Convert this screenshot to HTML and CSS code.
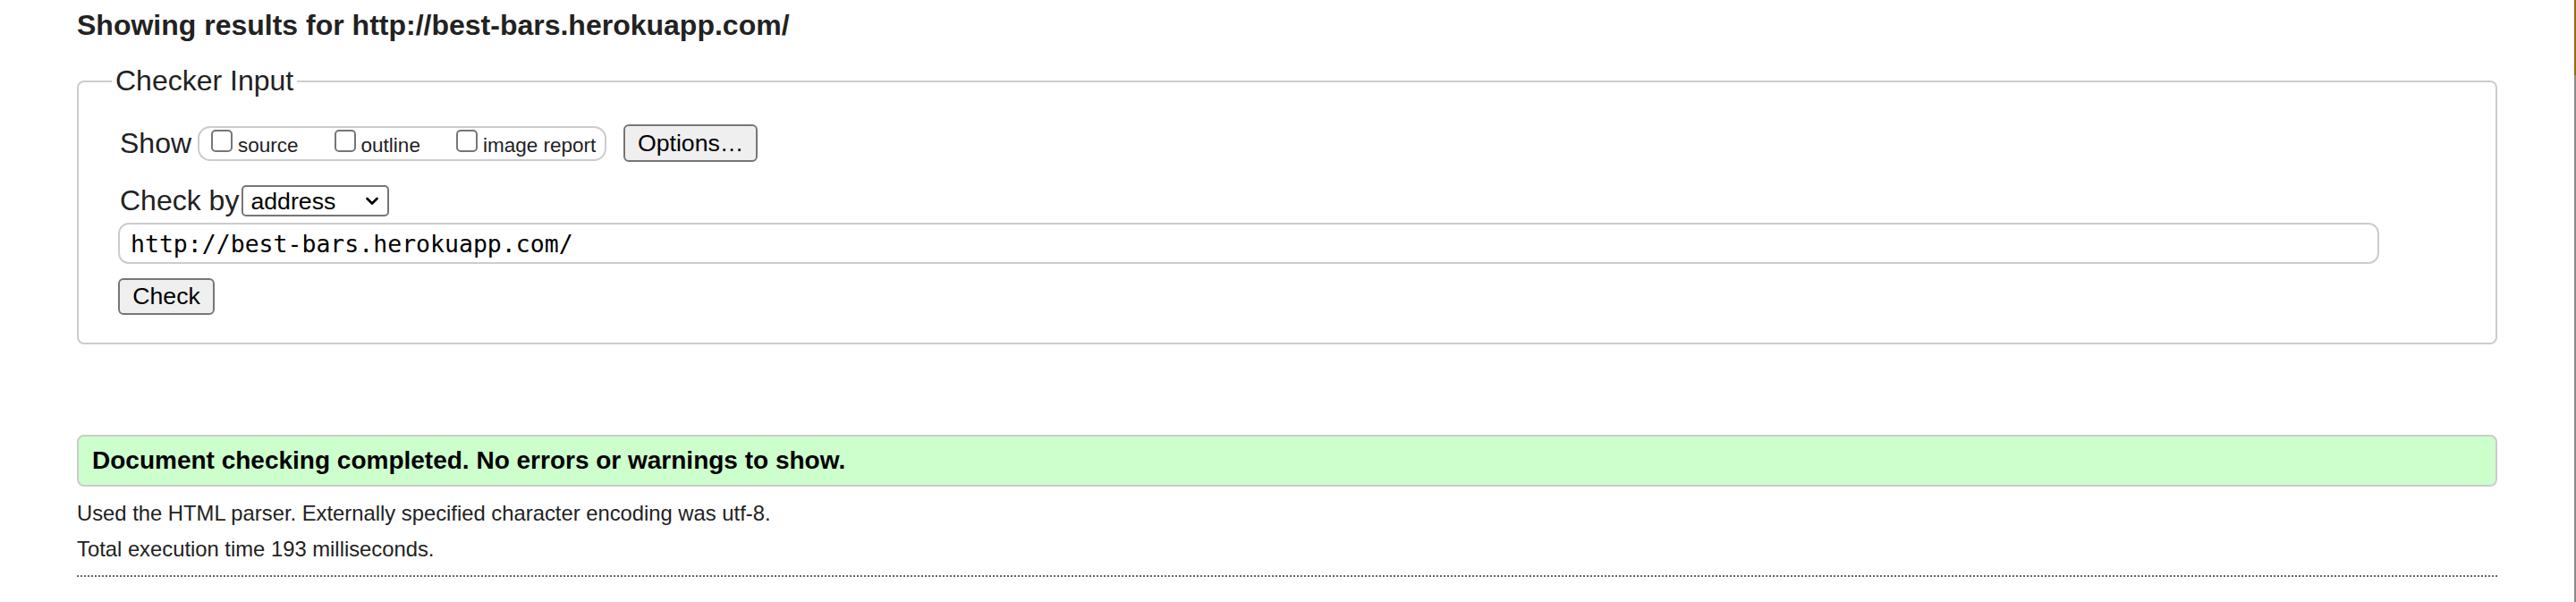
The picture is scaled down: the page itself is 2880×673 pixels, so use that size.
FILE: index.html
```html
<!DOCTYPE html>
<html lang="en">
<head>
<meta charset="utf-8">
<title>Showing results for http://best-bars.herokuapp.com/</title>
<link rel="stylesheet" href="styles.css">
</head>
<body>
<div class="page">
  <h2 class="title">Showing results for http://best-bars.herokuapp.com/</h2>
  <form class="checker">
    <fieldset class="fs">
      <legend class="legend">Checker Input</legend>
      <div class="row row-show">
        <span class="label">Show</span>
        <span class="group">
          <label class="opt"><input type="checkbox" class="cb"><span>source</span></label>
          <label class="opt"><input type="checkbox" class="cb"><span>outline</span></label>
          <label class="opt"><input type="checkbox" class="cb"><span>image report</span></label>
        </span>
        <button type="button" class="btn btn-options">Options…</button>
      </div>
      <div class="row row-by">
        <span class="label">Check by</span>
        <span class="select-wrap">
          <select class="select"><option>address</option></select>
          <svg class="chev" width="14" height="10" viewBox="0 0 14 10"><path d="M1.5 2 L7 7.5 L12.5 2" fill="none" stroke="#000" stroke-width="2.6" stroke-linecap="round" stroke-linejoin="round"/></svg>
        </span>
      </div>
      <div class="row row-url">
        <input type="text" class="url" value="http://best-bars.herokuapp.com/">
      </div>
      <div class="row row-submit">
        <button type="button" class="btn btn-check">Check</button>
      </div>
    </fieldset>
  </form>
  <div class="success">Document checking completed. No errors or warnings to show.</div>
  <p class="details">Used the HTML parser. Externally specified character encoding was utf-8.</p>
  <p class="details">Total execution time 193 milliseconds.</p>
  <hr class="dotted">
</div>
<div class="edge"><div class="edge-top"></div></div>
</body>
</html>
```
FILE: styles.css
```css
html, body {
  margin: 0;
  padding: 0;
  background: #fff;
}
body {
  font-family: "Liberation Sans", Arial, sans-serif;
  color: #222;
}
.page {
  padding: 0 88px 0 86px;
}
.title {
  font-size: 32px;
  font-weight: bold;
  line-height: 36px;
  margin: 10px 0 26px 0;
  color: #222;
}
.fs {
  margin: 0;
  border: 2px solid #ccc;
  border-radius: 8px;
  padding: 30px 44px 31px 44px;
}
.legend {
  font-size: 32px;
  line-height: 37px;
  padding: 0 4px;
  margin-left: -7px;
  color: #222;
}
.row {
  display: flex;
  align-items: center;
}
.label {
  font-size: 32px;
  margin-left: 2px;
  color: #222;
}
.row-show {
  height: 42px;
}
.row-show .label {
  margin-right: 7px;
}
.group {
  display: flex;
  align-items: center;
  height: 35px;
  border: 2px solid #ccc;
  border-radius: 14px;
  padding: 0 10px 0 13px;
  gap: 40px;
}
.opt {
  display: flex;
  align-items: flex-start;
  gap: 6px;
  font-size: 22.5px;
  color: #222;
  height: 30px;
}
.opt span {
  padding-top: 7px;
  line-height: 22px;
}
.cb {
  appearance: none;
  -webkit-appearance: none;
  margin: 0;
  width: 24px;
  height: 25px;
  border: 2px solid #767676;
  border-radius: 5px;
  background: #fff;
  box-sizing: border-box;
}
.btn {
  font-family: "Liberation Sans", Arial, sans-serif;
  font-size: 26.7px;
  color: #000;
  background: #efefef;
  border: 2px solid #767676;
  border-radius: 6px;
  box-sizing: border-box;
  padding: 0;
}
.btn-options {
  margin-left: 19px;
  width: 150px;
  height: 42px;
}
.row-by {
  margin-top: 26px;
  height: 35px;
}
.row-by .label {
  margin-right: 3px;
}
.select-wrap {
  position: relative;
  display: inline-flex;
}
.select {
  appearance: none;
  -webkit-appearance: none;
  width: 165px;
  height: 35px;
  box-sizing: border-box;
  border: 2px solid #767676;
  border-radius: 5px;
  background: #fff;
  font-family: "Liberation Sans", Arial, sans-serif;
  font-size: 26.7px;
  color: #000;
  padding: 0 0 0 8px;
}
.chev {
  position: absolute;
  right: 12px;
  top: 13px;
}
.row-url {
  margin-top: 7px;
}
.url {
  width: 2528px;
  height: 46px;
  box-sizing: border-box;
  border: 2px solid #ccc;
  border-radius: 12px;
  padding: 0 12px;
  font-family: "DejaVu Sans Mono", "Liberation Mono", monospace;
  font-size: 26.5px;
  color: #000;
  background: #fff;
}
.row-submit {
  margin-top: 16px;
}
.btn-check {
  width: 108px;
  height: 41px;
}
.success {
  margin-top: 101px;
  background: #ccffcc;
  border: 2px solid #ccc;
  border-radius: 8px;
  height: 58px;
  box-sizing: border-box;
  padding: 0 15px;
  display: flex;
  align-items: center;
  font-size: 28px;
  font-weight: bold;
  color: #000;
}
.details {
  font-size: 23.8px;
  line-height: 28px;
  margin: 16px 0 0 0;
  color: #222;
}
.details + .details {
  margin-top: 12px;
}
.dotted {
  margin: 15px 0 0 0;
  border: 0;
  border-top: 2px dotted #666;
  height: 0;
}
.edge {
  position: fixed;
  top: 0;
  right: 0;
  width: 2px;
  height: 100%;
  background: #8a8a8a;
}
.edge-top {
  height: 84px;
  background: #9a6a12;
}
```
